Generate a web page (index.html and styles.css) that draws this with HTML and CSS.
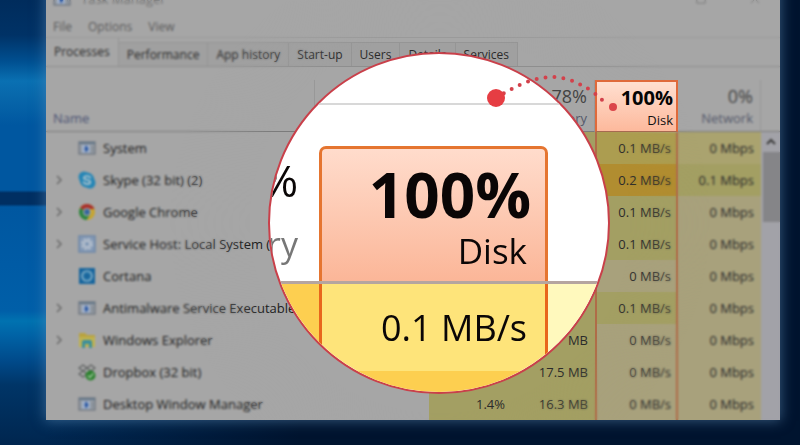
FILE: index.html
```html
<!DOCTYPE html>
<html lang="en">
<head>
<meta charset="utf-8">
<title>Task Manager</title>
<link rel="stylesheet" href="styles.css">
</head>
<body>
<svg class="defs" aria-hidden="true">
  <symbol id="i-app" viewBox="0 0 18 16"><rect x="1" y="2" width="16" height="12" fill="#959ba3" stroke="#747b84" stroke-width="1.4"/><path d="M1 3h16" stroke="#647789" stroke-width="2"/><rect x="4" y="5" width="8" height="8" fill="#9fafc8"/><path d="M8 5l2.500 4L8 12.500 6.500 9z" fill="#2a57a2"/><path d="M14.500 6v6" stroke="#7d8790"/></symbol>
  <symbol id="i-skype" viewBox="0 0 18 18"><circle cx="6" cy="6" r="5.500" fill="#2686b6"/><circle cx="12" cy="12" r="5.500" fill="#2686b6"/><circle cx="9" cy="9" r="7.400" fill="#2686b6"/><path d="M12.300 6.500C11 4.600 6 4.500 6 7c0 2.400 6.300 1.300 6.300 4 0 2.700-5.200 2.600-6.700.2" fill="none" stroke="#a5c0cc" stroke-width="1.900" stroke-linecap="round"/></symbol>
  <symbol id="i-chrome" viewBox="0 0 18 18"><circle cx="9" cy="9" r="8" fill="#c7a52f"/><path d="M9 9 2.100 5A8 8 0 0 1 16.500 6H9z" fill="#a92f2b"/><path d="M9 9 2.100 5A8 8 0 0 0 8.500 17l4-6z" fill="#2b8545"/><circle cx="9" cy="9" r="3.900" fill="#b0b0a8"/><circle cx="9" cy="9" r="2.900" fill="#35669e"/></symbol>
  <symbol id="i-gear" viewBox="0 0 18 18"><rect x="1" y="1" width="16" height="16" fill="#8499b5" stroke="#6f88a8" stroke-width="1.500"/><circle cx="9" cy="9" r="5" fill="none" stroke="#b0bccb" stroke-width="2.400" stroke-dasharray="2.600 1.300"/><circle cx="9" cy="9" r="4" fill="#b0bccb"/><circle cx="9" cy="9" r="1.800" fill="#718cae"/></symbol>
  <symbol id="i-cortana" viewBox="0 0 18 18"><rect x="1" y="1" width="16" height="16" fill="#17659d"/><circle cx="9" cy="9" r="5" fill="#2878ab" stroke="#80abc4" stroke-width="1.700"/><circle cx="9" cy="9" r="2.600" fill="#1a659b"/></symbol>
  <symbol id="i-folder" viewBox="0 0 18 18"><path d="M1 2h6l2 2h8v12H1z" fill="#b9a33f"/><path d="M1 6h16v10H1z" fill="#bfb250"/><path d="M4 17v-6q0-2 2-2h6q2 0 2 2v6h-3v-4H7v4z" fill="#3c8f9c"/></symbol>
  <symbol id="i-dropbox" viewBox="0 0 18 18"><path d="m5 2 4 3-4 3-4-3zM13 2l4 3-4 3-4-3zM5 8l4 3-4 3-4-3zM9 5l4 3-4 3-4-3z" fill="#a8a8a8" stroke="#5d6060" stroke-width="1.200"/><circle cx="12.500" cy="12.500" r="5" fill="#2c812e"/><path d="m10 12.500 2 2 3.200-4" fill="none" stroke="#9fc59d" stroke-width="1.500"/></symbol>
  <symbol id="i-chev" viewBox="0 0 10 12"><path d="m3 2 4 4-4 4" fill="none" stroke="#6a6a6a" stroke-width="1.500"/></symbol>
</svg>
<main class="desktop">
  <section class="window">
    <header class="titlebar">
      <svg class="icon"><use href="#i-app"/></svg>
      <span class="title">Task Manager</span>
      <svg class="control" viewBox="0 0 12 12"><path d="M1 1h10v10H1z"/></svg>
      <svg class="control" viewBox="0 0 12 12"><path d="m1 1 10 10M11 1 1 11"/></svg>
    </header>
    <nav class="menu"><button>File</button><button>Options</button><button>View</button></nav>
    <div class="tabs" role="tablist">
      <button class="tab active" role="tab" aria-selected="true">Processes</button><button class="tab" role="tab">Performance</button><button class="tab" role="tab">App history</button><button class="tab" role="tab">Start-up</button><button class="tab" role="tab">Users</button><button class="tab" role="tab">Details</button><button class="tab" role="tab">Services</button>
    </div>
    <div class="pane">
      <table>
        <colgroup><col><col class="c-status"><col class="c-num"><col class="c-num"><col class="c-num"><col class="c-num"></colgroup>
        <thead>
          <tr><th class="name">Name</th><th></th><th></th><th>
            <b>78%</b>Memory</th><th class="hot"><b>100%</b>Disk</th><th><b>0%</b>Network</th></tr>
        </thead>
        <tbody>
          <tr><td><div class="proc"><i></i><svg class="icon"><use href="#i-app"/></svg>System</div></td><td></td><td class="mid"></td><td class="mid"></td><td class="disk l3">0.1 MB/s</td><td class="l2">0 Mbps</td></tr>
          <tr><td><div class="proc"><button aria-label="Expand"><svg><use href="#i-chev"/></svg></button><svg class="icon"><use href="#i-skype"/></svg>Skype (32 bit) (2)</div></td><td></td><td class="mid"></td><td class="mid"></td><td class="disk l4">0.2 MB/s</td><td class="mid">0.1 Mbps</td></tr>
          <tr><td><div class="proc"><button aria-label="Expand"><svg><use href="#i-chev"/></svg></button><svg class="icon"><use href="#i-chrome"/></svg>Google Chrome</div></td><td></td><td class="mid"></td><td class="mid"></td><td class="disk mid">0.1 MB/s</td><td class="low">0 Mbps</td></tr>
          <tr><td><div class="proc"><button aria-label="Expand"><svg><use href="#i-chev"/></svg></button><svg class="icon"><use href="#i-gear"/></svg>Service Host: Local System (</div></td><td></td><td class="mid"></td><td class="mid"></td><td class="disk mid">0.1 MB/s</td><td class="low">0 Mbps</td></tr>
          <tr><td><div class="proc"><i></i><svg class="icon"><use href="#i-cortana"/></svg>Cortana</div></td><td></td><td class="mid"></td><td class="mid"></td><td class="disk low">0 MB/s</td><td class="low">0 Mbps</td></tr>
          <tr><td><div class="proc"><button aria-label="Expand"><svg><use href="#i-chev"/></svg></button><svg class="icon"><use href="#i-app"/></svg>Antimalware Service Executable</div></td><td></td><td class="mid"></td><td class="mid"></td><td class="disk mid">0.1 MB/s</td><td class="low">0 Mbps</td></tr>
          <tr><td><div class="proc"><button aria-label="Expand"><svg><use href="#i-chev"/></svg></button><svg class="icon"><use href="#i-folder"/></svg>Windows Explorer</div></td><td></td><td class="mid"></td><td class="mid">MB</td><td class="disk low">0 MB/s</td><td class="low">0 Mbps</td></tr>
          <tr><td><div class="proc"><i></i><svg class="icon"><use href="#i-dropbox"/></svg>Dropbox (32 bit)</div></td><td></td><td class="mid"></td><td class="mid">17.5 MB</td><td class="disk low">0 MB/s</td><td class="low">0 Mbps</td></tr>
          <tr><td><div class="proc"><i></i><svg class="icon"><use href="#i-app"/></svg>Desktop Window Manager</div></td><td></td><td class="mid">1.4%</td><td class="mid">16.3 MB</td><td class="disk low">0 MB/s</td><td class="low">0 Mbps</td></tr>
        </tbody>
      </table>
      <div class="scroll">
        <div class="scroll-head"></div>
        <button class="up" aria-label="Scroll up"><svg viewBox="0 0 12 10"><path d="m2 7 4-4 4 4" fill="none" stroke="#3c3c3c" stroke-width="2"/></svg></button>
        <div class="thumb"></div>
      </div>
    </div>
    <div class="focus-blur"></div>
  </section>

  <div class="lens">
    <div class="lens-top"></div>
    <div class="lens-grid">
      <div class="lens-side"><span class="pct">%</span><span class="label">ry</span></div>
      <div class="lens-card"><strong>100%</strong><span>Disk</span></div>
      <div class="lens-rest"></div>
    </div>
    <div class="lens-grid values">
      <div class="lens-side"></div>
      <div class="lens-value">0.1 MB/s</div>
      <div class="lens-rest"></div>
    </div>
    <div class="lens-foot"></div>
  </div>
  <svg class="trail" viewBox="0 0 140 50">
    <path d="M16 28C48 8 74 -1 103 16Q114 21 126 34" fill="none" stroke="#d3414b" stroke-width="4" stroke-linecap="round" stroke-dasharray="0 9"/>
    <circle cx="16" cy="28" r="9" fill="#e63d43"/><circle cx="133" cy="37" r="4" fill="#db454a"/>
  </svg>
</main>
</body>
</html>
```

FILE: styles.css
```css
* { box-sizing: border-box; }
body {
  margin: 0;
  font: 13px/16px "Open Sans", "Noto Sans", sans-serif;
  color: #2b2b2b;
}
button {
  margin: 0;
  padding: 0;
  border: 0;
  background: none;
  font: inherit;
  color: inherit;
}
.defs { position: absolute; width: 0; height: 0; }

.desktop {
  position: relative;
  display: flow-root;
  min-height: 100vh;
  padding: 0 20px 25px 46px;
  overflow: hidden;
  background:
    linear-gradient(90deg, #0000 0 46px, #00142f 300px),
    linear-gradient(0deg, #00264f 0, #003567 60px, #004a8a 84px, #0063a6 110px, #0072b0 124px, #005fa8 134px, #005ba5 180px, #0057a0 238px, #002f62 241px 252px, #0057a0 255px 320px, #0868ab 350px, #0a70b2 364px, #004f90 384px, #003266 410px, #002c5c 445px);
}
.window {
  position: relative;
  margin-top: -18px;
  background: #a6a6a6;
  box-shadow: 0 0 12px 1px #5f8fb888;
}
.titlebar {
  display: flex;
  align-items: center;
  height: 34px;
  padding: 0 20px 0 7px;
  color: #777;
}
.title { flex: 1; margin-left: 10px; }
.icon { width: 18px; height: 18px; flex: none; }
.control {
  width: 10px;
  height: 10px;
  margin-left: 44px;
  fill: none;
  stroke: #777;
}
.menu {
  display: flex;
  gap: 16px;
  height: 22px;
  padding-left: 7px;
  border-bottom: 1px solid #9a9a9a;
  font-size: 12px;
  color: #5c5c5c;
}
.tabs {
  display: flex;
  align-items: flex-end;
  height: 29px;
  border-bottom: 1px solid #8e8e8e;
}
.tab {
  height: 24px;
  padding: 0 8px;
  border: 1px solid #959595;
  border-left: 0;
  border-bottom: 0;
  background: #a0a0a0;
  font-size: 12px;
  font-weight: 500;
}
.tab.active {
  height: 28px;
  border-top: 0;
  background: #a6a6a6;
}

.pane { display: flex; padding-top: 13px; }
table {
  flex: 1;
  width: 0;
  table-layout: fixed;
  border-collapse: separate;
  border-spacing: 0;
}
.c-status { width: 114px; }
.c-num { width: 83px; }
th {
  height: 52px;
  padding: 0 7px 5px 0;
  border-right: 1px solid #989898;
  border-bottom: 1px solid #7b7b7b;
  text-align: right;
  vertical-align: bottom;
  font-weight: 400;
  color: #55596a;
}
th b {
  display: block;
  font-size: 18px;
  line-height: 28px;
  font-weight: 400;
  color: #444;
}
th.name { padding-left: 7px; text-align: left; color: #4d5474; }
th.hot {
  position: relative;
  z-index: 3;
  padding: 0 3px 3px 0;
  border: 2px solid #df6a3b;
  border-bottom: 1px solid #a66a50;
  background: linear-gradient(#ffdfd0, #fdb99c);
  color: #111;
  font-weight: 500;
}
th.hot b {
  font-size: 20px;
  font-weight: 700;
  color: #050505;
}
td {
  height: 32px;
  padding: 0 7px 0 0;
  text-align: right;
  white-space: nowrap;
}
.proc {
  display: flex;
  align-items: center;
  padding-left: 7px;
  color: #202020;
}
.proc i, .proc button { width: 12px; height: 12px; flex: none; }
.proc button svg { display: block; width: 12px; height: 12px; }
.proc .icon { margin: 0 7px 0 13px; }
.low { background: #a8a17c; }
.l2 { background: #aaa36f; }
.mid { background: #a39f63; }
.l3 { background: #ac9d50; }
.l4 { background: #b18d30; }
.disk { border-left: 2px solid #af6c48; border-right: 2px solid #af6c48; padding-right: 5px; }

.scroll { width: 19px; background: #a2a2a8; }
.scroll-head { height: 52px; border-bottom: 1px solid #7b7b7b; background: #a6a6a6; }
.up { display: block; width: 100%; height: 20px; }
.up svg { width: 12px; height: 10px; }
.thumb { height: 70px; margin-left: 2px; background: #858588; }

.focus-blur {
  position: absolute;
  inset: 0;
  z-index: 2;
  backdrop-filter: blur(1px);
  mask-image: radial-gradient(circle at right 340px top 241px, #0000 190px, #000 270px);
}

.lens {
  position: absolute;
  z-index: 4;
  top: 52px;
  right: 190px;
  width: 342px;
  height: 342px;
  overflow: hidden;
  border: 2px solid #c9404a;
  border-radius: 50%;
  background: #fff;
  color: #0a0606;
}
.lens-top { height: 51px; margin-bottom: 41px; border-bottom: 2px solid #d8d8d8; }
.lens-grid { display: grid; grid-template-columns: 49px 229px 1fr; }
.lens-side {
  display: flex;
  flex-direction: column;
  align-items: flex-end;
  padding-right: 21px;
}
.pct { font-size: 44px; line-height: 68px; }
.label { font-size: 34px; line-height: 60px; color: #777; }
.lens-card {
  height: 135px;
  padding-top: 12px;
  border: 3px solid #e57530;
  border-bottom: 0;
  border-radius: 7px 7px 0 0;
  background: linear-gradient(#ffdccc, #fbb698);
  text-align: right;
}
.lens-card strong { display: block; padding-right: 14px; font-size: 62px; line-height: 66px; font-weight: 700; }
.lens-card span { display: block; padding-right: 18px; font-size: 35px; line-height: 48px; font-weight: 500; }
.values { height: 90px; border-top: 3px solid #b5a5a0; }
.values .lens-side { background: #fdcf50; }
.values .lens-rest { background: #fff9bd; }
.lens-value {
  padding: 20px 18px 0 0;
  border: solid #e8661c;
  border-width: 0 3px;
  background: #fee47a;
  text-align: right;
  font-size: 36px;
  line-height: 48px;
}
.lens-foot { height: 40px; background: #fdcf50; }
.trail {
  position: absolute;
  z-index: 5;
  top: 70px;
  right: 180px;
  width: 140px;
  height: 50px;
}
```
